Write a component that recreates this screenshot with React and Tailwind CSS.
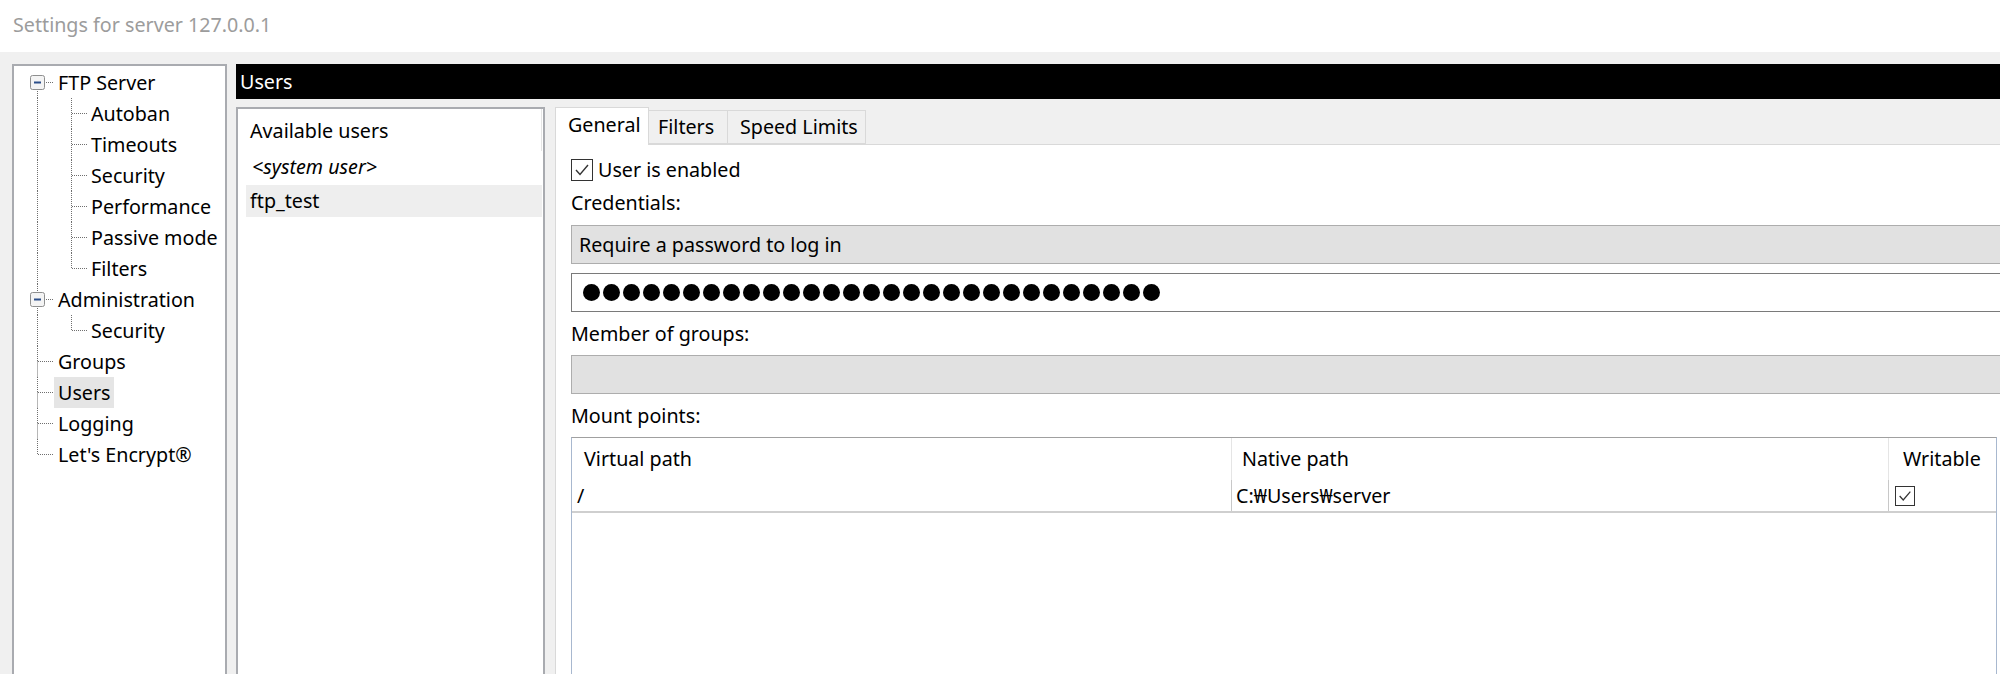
import React from "react";

const font = { fontFamily: '"Noto Sans", "Noto Sans CJK KR", sans-serif' };

const treeRows = [
  { label: "FTP Server", level: 1, box: true, up: false, down: true },
  { label: "Autoban", level: 2, last: false },
  { label: "Timeouts", level: 2, last: false },
  { label: "Security", level: 2, last: false },
  { label: "Performance", level: 2, last: false },
  { label: "Passive mode", level: 2, last: false },
  { label: "Filters", level: 2, last: true },
  { label: "Administration", level: 1, box: true, up: true, down: true },
  { label: "Security", level: 2, last: true },
  { label: "Groups", level: 1, up: true, down: true },
  { label: "Users", level: 1, up: true, down: true, selected: true },
  { label: "Logging", level: 1, up: true, down: true },
  { label: "Let's Encrypt®", level: 1, up: true, down: false },
];

function Gutter({ row }) {
  const h = 31;
  const c = 15.5;
  const line = { stroke: "#6f6f6f", strokeWidth: 1, strokeDasharray: "1 1" };
  if (row.level === 1) {
    return (
      <svg width="44" height={h} className="shrink-0">
        {row.up ? <line x1="23.5" y1="0" x2="23.5" y2={row.box ? 9 : c} {...line} /> : null}
        {row.down ? <line x1="23.5" y1={row.box ? 24 : c} x2="23.5" y2={h} {...line} /> : null}
        <line x1={row.box ? 32 : 24} y1={c} x2="39" y2={c} {...line} />
        {row.box ? (
          <g>
            <rect x="16.5" y="8.5" width="14" height="14" rx="2" fill="#f4f4f4" stroke="#8e8f8f" />
            <line x1="20" y1="15.5" x2="27" y2="15.5" stroke="#2c4f8a" strokeWidth="2" />
          </g>
        ) : null}
      </svg>
    );
  }
  return (
    <svg width="77" height={h} className="shrink-0">
      <line x1="23.5" y1="0" x2="23.5" y2={h} {...line} />
      <line x1="57.5" y1="0" x2="57.5" y2={row.last ? c : h} {...line} />
      <line x1="58" y1={c} x2="73" y2={c} {...line} />
    </svg>
  );
}

function Check({ size = 22 }) {
  return (
    <div
      className="flex shrink-0 items-center justify-center border-[1.5px] border-[#333] bg-white"
      style={{ width: size, height: size }}
    >
      <svg width={size - 4} height={size - 4} viewBox="0 0 18 18">
        <polyline points="3,9 7,13.5 15,4" fill="none" stroke="#333" strokeWidth="1.4" />
      </svg>
    </div>
  );
}

export default function App() {
  const dots = Array.from({ length: 29 });
  return (
    <div className="h-[674px] w-[2000px] overflow-hidden bg-[#f0f0f0] text-[19.7px] text-black" style={font}>
      <div className="flex h-[52px] items-center bg-white pl-[13px] pb-[3px] text-[#9c9c9c]">
        Settings for server 127.0.0.1
      </div>

      <div className="flex pl-[12px] pt-[12px]">
        <div className="h-[700px] w-[215px] shrink-0 border-2 border-[#a9abb0] bg-white pt-[1px]">
          {treeRows.map((row, i) => (
            <div key={i} className="flex h-[31px] items-center">
              <Gutter row={row} />
              <span
                className={
                  "flex h-[31px] items-center whitespace-nowrap leading-none " +
                  (row.selected ? "-ml-[4px] bg-[#e5e5e5] pl-[4px] pr-[3px]" : "")
                }
              >
                {row.label}
              </span>
            </div>
          ))}
        </div>

        <div className="ml-[9px] flex w-[1900px] shrink-0 flex-col">
          <div className="flex h-[35px] items-center bg-black pl-[4px] leading-none text-white">Users</div>

          <div className="mt-[8px] flex">
            <div className="relative h-[600px] w-[309px] shrink-0 border-2 border-[#a9abb0] bg-white">
              <div className="absolute right-[1px] top-0 h-[42px] w-px bg-[#e5e5e5]" />
              <div className="flex h-[40px] items-center pl-[12px] pt-[4px] leading-none">Available users</div>
              <div className="flex h-[36px] items-center pl-[14px] italic leading-none">&lt;system user&gt;</div>
              <div className="ml-[8px] mr-[1px] flex h-[32px] items-center bg-[#eeeeee] pl-[4px] leading-none">
                ftp_test
              </div>
            </div>

            <div className="ml-[10px] flex w-[1500px] shrink-0 flex-col">
              <div className="flex h-[37px] items-end">
                <div className="relative z-10 -mb-px flex h-[38px] w-[94px] items-center border border-b-0 border-[#d9d9d9] bg-white pl-[12px] pb-[4px] leading-none">
                  General
                </div>
                <div className="flex h-[34px] w-[79px] items-center border border-l-0 border-[#d9d9d9] bg-[#f0f0f0] pl-[9px] leading-none">
                  Filters
                </div>
                <div className="flex h-[34px] w-[138px] items-center border border-l-0 border-[#d9d9d9] bg-[#f0f0f0] pl-[12px] leading-none">
                  Speed Limits
                </div>
              </div>

              <div className="h-[600px] border border-[#d9d9d9] bg-white pl-[15px] pt-[10px]">
                <div className="flex h-[30px] items-center gap-[5px] leading-none">
                  <Check />
                  <span>User is enabled</span>
                </div>
                <div className="flex h-[36px] items-center leading-none">Credentials:</div>
                <div className="mt-[4px] flex h-[39px] items-center border border-[#adadad] bg-[#e1e1e1] pl-[7px] leading-none">
                  Require a password to log in
                </div>
                <div className="mt-[9px] flex h-[39px] items-center border-[1.5px] border-[#7a7a7a] bg-white pl-[11px]">
                  {dots.map((_, i) => (
                    <span key={i} className="mr-[3px] block h-[17px] w-[17px] shrink-0 rounded-full bg-black" />
                  ))}
                </div>
                <div className="flex h-[43px] items-center leading-none">Member of groups:</div>
                <div className="h-[39px] border border-[#adadad] bg-[#e1e1e1]" />
                <div className="flex h-[43px] items-center leading-none">Mount points:</div>

                <div className="h-[300px] w-[1426px] border border-[#a8b8cf] border-t-[#a0a0a0] bg-white">
                  <div className="flex h-[42px] items-center leading-none">
                    <div className="flex h-full w-[659px] items-center pl-[12px]">Virtual path</div>
                    <div className="flex h-full w-[657px] items-center border-l border-[#e5e5e5] pl-[10px]">Native path</div>
                    <div className="flex h-full flex-1 items-center border-l border-[#e5e5e5] pl-[14px]">Writable</div>
                  </div>
                  <div className="flex h-[33px] items-center border-b-2 border-[#cfcfcf] leading-none">
                    <div className="flex h-full w-[659px] items-center pl-[5px]">/</div>
                    <div className="flex h-full w-[657px] items-center border-l border-[#c8c8c8] pl-[4px]">C:₩Users₩server</div>
                    <div className="flex h-full flex-1 items-center border-l border-[#c8c8c8] pl-[6px]">
                      <Check size={20} />
                    </div>
                  </div>
                </div>
              </div>
            </div>
          </div>
        </div>
      </div>
    </div>
  );
}
